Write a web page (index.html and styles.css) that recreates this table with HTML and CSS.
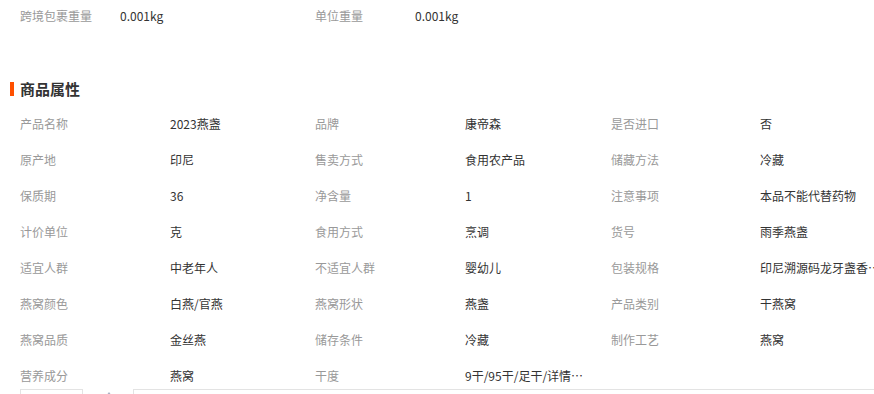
FILE: index.html
```html
<!DOCTYPE html>
<html lang="zh">
<head>
<meta charset="utf-8">
<link rel="stylesheet" href="styles.css">
</head>
<body>
<div class="page">
  <div class="top-row">
    <div class="pair"><span class="label">跨境包裹重量</span><span class="value">0.001kg</span></div>
    <div class="pair"><span class="label">单位重量</span><span class="value">0.001kg</span></div>
  </div>
  <h2 class="section-title">商品属性</h2>
  <div class="attrs">
    <span class="label">产品名称</span><span class="value">2023燕盏</span>
    <span class="label">品牌</span><span class="value">康帝森</span>
    <span class="label">是否进口</span><span class="value">否</span>

    <span class="label">原产地</span><span class="value">印尼</span>
    <span class="label">售卖方式</span><span class="value">食用农产品</span>
    <span class="label">储藏方法</span><span class="value">冷藏</span>

    <span class="label">保质期</span><span class="value">36</span>
    <span class="label">净含量</span><span class="value">1</span>
    <span class="label">注意事项</span><span class="value">本品不能代替药物</span>

    <span class="label">计价单位</span><span class="value">克</span>
    <span class="label">食用方式</span><span class="value">烹调</span>
    <span class="label">货号</span><span class="value">雨季燕盏</span>

    <span class="label">适宜人群</span><span class="value">中老年人</span>
    <span class="label">不适宜人群</span><span class="value">婴幼儿</span>
    <span class="label">包装规格</span><span class="value">印尼溯源码龙牙盏香港直邮礼盒装</span>

    <span class="label">燕窝颜色</span><span class="value">白燕/官燕</span>
    <span class="label">燕窝形状</span><span class="value">燕盏</span>
    <span class="label">产品类别</span><span class="value">干燕窝</span>

    <span class="label">燕窝品质</span><span class="value">金丝燕</span>
    <span class="label">储存条件</span><span class="value">冷藏</span>
    <span class="label">制作工艺</span><span class="value">燕窝</span>

    <span class="label">营养成分</span><span class="value">燕窝</span>
    <span class="label">干度</span><span class="value narrow">9干/95干/足干/详情页说明</span>
    <span class="label"></span><span class="value"></span>
  </div>
  <div class="bottom-bar">
    <div class="mini-box"></div>
    <svg class="caret" width="8" height="6" viewBox="0 0 8 6"><path d="M1 6 L4 2 L7 6 Z" fill="#a9b0c4"/></svg>
    <div class="wide-box"></div>
  </div>
</div>
</body>
</html>
```
FILE: styles.css
```css
* { box-sizing: border-box; }
html, body { margin: 0; padding: 0; background: #fff; }
body {
  font-family: "Microsoft YaHei", "Noto Sans CJK SC", "Noto Sans", sans-serif;
  font-size: 12px;
  color: #333;
  width: 874px;
  height: 394px;
  overflow: hidden;
}
.page { padding-left: 20px; }
.top-row {
  display: flex;
  height: 32px;
  line-height: 32px;
}
.top-row .pair { display: flex; width: 295px; }
.top-row .label { width: 100px; color: #999; }
.top-row .value { color: #333; }
.section-title {
  margin: 50px 0 15px -10px;
  padding-left: 6px;
  border-left: 4px solid #ff5000;
  font-size: 15px;
  font-weight: bold;
  line-height: 14px;
  height: 14px;
  color: #333;
}
.attrs {
  display: grid;
  grid-template-columns: 150px 145px 150px 146px 149px 121px;
  grid-auto-rows: 26px;
  row-gap: 10px;
  line-height: 26px;
}
.attrs .label { color: #999; white-space: nowrap; }
.attrs .value {
  color: #333;
  white-space: nowrap;
  overflow: hidden;
  text-overflow: ellipsis;
}
.attrs .value.narrow { max-width: 124px; }
.bottom-bar {
  display: flex;
  align-items: flex-start;
  height: 6px;
}
.mini-box {
  width: 63px;
  height: 10px;
  border: 1px solid #e3e3e3;
}
.caret { margin: 1px 0 0 22px; }
.wide-box {
  margin-left: 20px;
  flex: 1;
  height: 10px;
  border-top: 1px solid #e3e3e3;
  border-left: 1px solid #e3e3e3;
}
```
